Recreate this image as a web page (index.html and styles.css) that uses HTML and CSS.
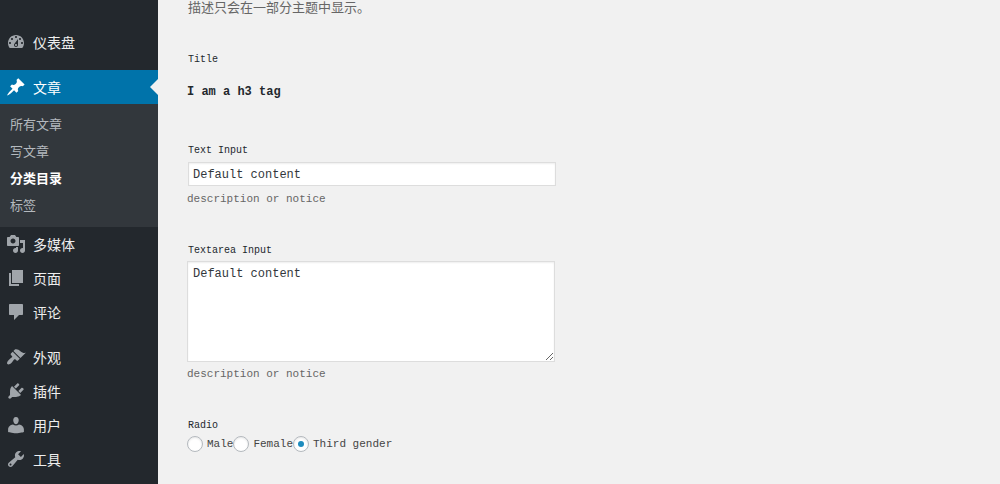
FILE: index.html
```
<!DOCTYPE html>
<html lang="zh-CN">
<head>
    <meta charset="UTF-8">
    <meta name="viewport" content="width=device-width, initial-scale=1.0">
    <title>分类目录</title>
    <link rel="stylesheet" href="styles.css">
</head>
<body>
    <nav class="admin-menu">
        <ul class="menu">
            <li>
                <a class="menu-link" href="#">
                    <svg class="icon" viewBox="0 0 20 20"><path fill-rule="evenodd" d="M3.76 16h12.48c1.1-1.37 1.76-3.11 1.76-5 0-4.42-3.58-8-8-8s-8 3.58-8 8c0 1.89.66 3.63 1.76 5zM10 4c.55 0 1 .45 1 1s-.45 1-1 1-1-.45-1-1 .45-1 1-1zM6 6c.55 0 1 .45 1 1s-.45 1-1 1-1-.45-1-1 .45-1 1-1zm8 0c.55 0 1 .45 1 1s-.45 1-1 1-1-.45-1-1 .45-1 1-1zm-5.37 5.55L12 7v6c0 1.1-.9 2-2 2s-2-.9-2-2c0-.57.24-1.08.63-1.45zM4 10c.55 0 1 .45 1 1s-.45 1-1 1-1-.45-1-1 .45-1 1-1zm12 0c.55 0 1 .45 1 1s-.45 1-1 1-1-.45-1-1 .45-1 1-1zm-5 3c0-.55-.45-1-1-1s-1 .45-1 1 .45 1 1 1 1-.45 1-1z"/></svg>
                    仪表盘
                </a>
            </li>
            <li class="separator"></li>
            <li>
                <a class="menu-link current" href="#">
                    <svg class="icon" viewBox="0 0 20 20"><path d="M10.44 3.02l1.82-1.82 6.36 6.35-1.83 1.82c-1.05-.68-2.48-.57-3.41.36l-.75.75c-.92.93-1.04 2.35-.35 3.41l-1.83 1.82-2.41-2.41-2.8 2.79c-.42.42-3.38 2.71-3.8 2.29s1.86-3.39 2.28-3.81l2.79-2.79L4.1 9.36l1.83-1.82c1.05.69 2.48.57 3.4-.36l.75-.75c.93-.92 1.05-2.35.36-3.41z"/></svg>
                    文章
                </a>
                <ul class="submenu">
                    <li><a href="#">所有文章</a></li>
                    <li><a href="#">写文章</a></li>
                    <li><a class="active" href="#">分类目录</a></li>
                    <li><a href="#">标签</a></li>
                </ul>
            </li>
            <li>
                <a class="menu-link" href="#">
                    <svg class="icon" viewBox="0 0 20 20"><path fill-rule="evenodd" d="M13 11V4c0-.55-.45-1-1-1h-1.67L9 1H5L3.67 3H2c-.55 0-1 .45-1 1v7c0 .55.45 1 1 1h10c.55 0 1-.45 1-1zM7 4.5c1.38 0 2.5 1.12 2.5 2.5S8.38 9.5 7 9.5 4.5 8.38 4.5 7 5.62 4.5 7 4.5zM14 6h5v10.5c0 1.38-1.12 2.5-2.5 2.5S14 17.88 14 16.5s1.12-2.5 2.5-2.5c.17 0 .34.02.5.05V9h-3V6zm-4 8.05V13h2v3.5c0 1.38-1.12 2.5-2.5 2.5S7 17.88 7 16.5 8.12 14 9.5 14c.17 0 .34.02.5.05z"/></svg>
                    多媒体
                </a>
            </li>
            <li>
                <a class="menu-link" href="#">
                    <svg class="icon" viewBox="0 0 20 20"><path d="M6 15V2h11v13H6zm-1 1h8v2H3V5h2v11z"/></svg>
                    页面
                </a>
            </li>
            <li>
                <a class="menu-link" href="#">
                    <svg class="icon" viewBox="0 0 20 20"><path d="M4 2h12c.6 0 1 .4 1 1v9c0 .6-.4 1-1 1h-3l-5 5v-5H4c-.6 0-1-.4-1-1V3c0-.6.4-1 1-1z"/></svg>
                    评论
                </a>
            </li>
            <li class="separator"></li>
            <li>
                <a class="menu-link" href="#">
                    <svg class="icon" viewBox="0 0 20 20"><path d="M14.48 11.06L7.41 3.99l1.5-1.5c.5-.56 2.3-.47 3.51.32 1.21.8 1.43 1.28 2.91 2.1 1.18.64 2.45 1.26 4.45.85zm-.71.71L6.7 4.7 4.93 6.47c-.39.39-.39 1.02 0 1.41l1.06 1.06c.39.39.39 1.03 0 1.42-.6.6-1.43 1.11-2.21 1.69-.35.26-.7.53-1.01.84C1.43 14.23.4 16.08 1.4 17.07c.99 1 2.84-.03 4.18-1.36.31-.31.58-.66.85-1.02.57-.78 1.08-1.61 1.69-2.21.39-.39 1.02-.39 1.41 0l1.06 1.06c.39.39 1.02.39 1.41 0z"/></svg>
                    外观
                </a>
            </li>
            <li>
                <a class="menu-link" href="#">
                    <svg class="icon" viewBox="0 0 20 20"><path d="M13.11 4.36L9.87 7.6 8 5.73l3.24-3.24c.35-.34 1.05-.2 1.56.32.52.51.66 1.21.31 1.55zm-8 1.77l.91-1.12 9.01 9.01-1.19.84c-.71.71-2.63 1.16-3.82 1.16H6.14L4.9 17.26c-.59.59-1.54.59-2.12 0-.59-.58-.59-1.53 0-2.12l1.24-1.24v-3.88c0-1.13.4-3.19 1.09-3.89zm7.26 3.97l3.24-3.24c.34-.35 1.04-.21 1.55.31.52.51.66 1.21.31 1.55l-3.24 3.25z"/></svg>
                    插件
                </a>
            </li>
            <li>
                <a class="menu-link" href="#">
                    <svg class="icon" viewBox="0 0 20 20"><path d="M10 9.25c-2.27 0-2.73-3.44-2.73-3.44C7 4.02 7.82 2 9.97 2c2.16 0 2.98 2.02 2.71 3.81 0 0-.41 3.44-2.68 3.44zM7 9.6c1.8 1.2 4.2 1.2 6 0 2.8.2 4.9 2.5 4.9 4.9v2.5S14 18.2 10 18.2 2.1 17 2.1 17v-2.5C2.1 12.1 4.200 9.8 7 9.6z"/></svg>
                    用户
                </a>
            </li>
            <li>
                <a class="menu-link" href="#">
                    <svg class="icon" viewBox="0 0 20 20"><path fill-rule="evenodd" d="M16.68 9.77c-1.34 1.34-3.3 1.67-4.95.99l-5.41 6.52c-.99.99-2.59.99-3.58 0s-.99-2.59 0-3.57l6.52-5.42c-.68-1.65-.35-3.61.99-4.95 1.28-1.28 3.12-1.62 4.72-1.06l-2.89 2.89 2.82 2.82 2.86-2.87c.53 1.58.18 3.39-1.08 4.65zM3.81 16.21c.4.39 1.04.39 1.43 0 .4-.4.4-1.04 0-1.43-.39-.4-1.03-.4-1.43 0-.39.39-.39 1.03 0 1.43z"/></svg>
                    工具
                </a>
            </li>
        </ul>
    </nav>
    <main class="content">
        <p class="intro">描述只会在一部分主题中显示。</p>
        <form>
            <div class="field">
                <div class="label">Title</div>
                <h3>I am a h3 tag</h3>
            </div>
            <div class="field">
                <label class="label" for="text-input">Text Input</label>
                <input type="text" id="text-input" value="Default content">
                <p class="description">description or notice</p>
            </div>
            <div class="field">
                <label class="label" for="textarea-input">Textarea Input</label>
                <textarea id="textarea-input">Default content</textarea>
                <p class="description">description or notice</p>
            </div>
            <div class="field">
                <div class="label" id="radio-label">Radio</div>
                <div class="radios" role="radiogroup" aria-labelledby="radio-label">
                    <label><input type="radio" name="gender" value="male">Male</label>
                    <label><input type="radio" name="gender" value="female">Female</label>
                    <label><input type="radio" name="gender" value="third" checked>Third gender</label>
                </div>
            </div>
        </form>
    </main>
</body>
</html>
```
FILE: styles.css
```
* {
    box-sizing: border-box;
}

body {
    display: flex;
    min-height: 100vh;
    margin: 0;
    background: #f1f1f1;
    color: #444;
    font-family: "Liberation Mono", "Noto Sans CJK SC", monospace;
    font-size: 11px;
}

.admin-menu {
    flex: none;
    width: 158px;
    padding-top: 25px;
    background: #23282d;
    font-family: "Noto Sans CJK SC", sans-serif;
}

.menu,
.submenu {
    margin: 0;
    padding: 0;
    list-style: none;
}

.menu-link {
    display: flex;
    align-items: center;
    gap: 7px;
    height: 34px;
    padding-left: 6px;
    color: #eee;
    font-size: 14px;
    line-height: 18px;
    text-decoration: none;
}

.icon {
    width: 20px;
    height: 20px;
    fill: #a0a5aa;
}

.separator {
    height: 11px;
}

.current {
    background: #0073aa;
    color: #fff;
}

.current .icon {
    fill: #fff;
}

/* arrow pointing at the open section */
.current::after {
    content: "";
    margin-left: auto;
    border: 8px solid transparent;
    border-left-width: 0;
    border-right-color: #f1f1f1;
}

.submenu {
    padding: 6px 0 9px;
    background: #32373c;
}

.submenu a {
    display: block;
    padding: 0 10px;
    color: #b4b9be;
    font-size: 13px;
    line-height: 27px;
    text-decoration: none;
}

.submenu .active {
    color: #fff;
    font-weight: bold;
}

.content {
    flex: 1;
    min-width: 0;
    padding: 0 29px;
}

.intro {
    margin: 0 0 36px;
    padding-left: 1px;
    color: #666;
    font-family: "Noto Sans CJK TC", sans-serif;
    font-size: 13px;
    line-height: 14px;
}

.field {
    max-width: 368px;
    padding-bottom: 32px;
}

.field:last-child {
    padding-bottom: 0;
}

.label {
    display: block;
    padding-left: 1px;
    color: #23282d;
    font-size: 10px;
    line-height: 20px;
}

h3 {
    margin: 12px 0 7px;
    color: #23282d;
    font-size: 12px;
    line-height: 20px;
}

input[type="text"],
textarea {
    display: block;
    width: 100%;
    border: 1px solid #ddd;
    background: #fff;
    box-shadow: inset 0 1px 2px rgba(0, 0, 0, 0.07);
    color: #32373c;
    font-family: inherit;
    font-size: 12px;
}

input[type="text"] {
    height: 24px;
    margin: 1px 1px 3px;
    padding: 3px 4px 1px;
}

textarea {
    height: 101px;
    margin: 0;
    padding: 4px 5px;
    line-height: 16px;
    resize: vertical;
}

.description {
    margin: 2px 0 0;
    color: #666;
    line-height: 20px;
}

.radios {
    display: flex;
}

.radios label {
    display: flex;
    align-items: center;
    gap: 4px;
    line-height: 16px;
}

input[type="radio"] {
    appearance: none;
    display: grid;
    place-items: center;
    width: 16px;
    height: 16px;
    margin: 0;
    border: 1px solid #b4b9be;
    border-radius: 50%;
    background: #fff;
    box-shadow: inset 0 1px 2px rgba(0, 0, 0, 0.1);
}

input[type="radio"]:checked::before {
    content: "";
    width: 6px;
    height: 6px;
    border-radius: 50%;
    background: #1e8cbe;
}
```
